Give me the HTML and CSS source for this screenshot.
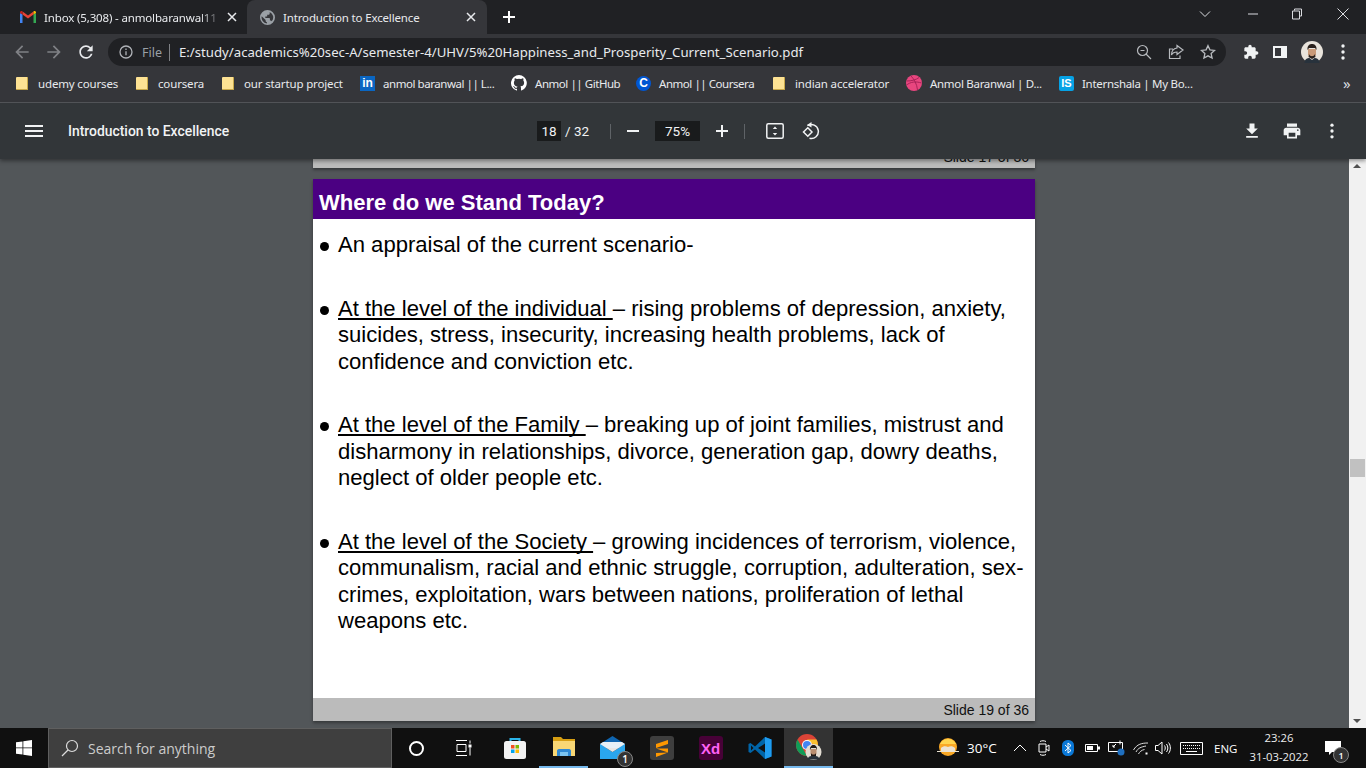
FILE: index.html
```html
<!DOCTYPE html>
<html lang="en">
<head>
    <meta charset="UTF-8">
    <meta name="viewport" content="width=device-width, initial-scale=1.0">
    <title>Introduction to Excellence</title>
    <link rel="stylesheet" href="styles.css">
</head>
<body>
    <!-- chrome tabs -->
    <div class="tabstrip">
        <div class="tab">
            <svg class="tab-icon" width="16" height="16" viewBox="0 0 16 16"><path fill="#4285f4" d="M0 14V4l2.5 1.5V14z"/><path fill="#34a853" d="M13.500 14V5.500L16 4v10z"/><path fill="#ea4335" d="M2.500 5.500 8 9.500l5.500-4V2.500L8 6.500 2.500 2.500z"/><path fill="#c5221f" d="M0 4V3.500c0-1.300 1.500-2 2.500-1v3z"/><path fill="#fbbc04" d="M13.500 5.500v-3c1-1 2.500-.3 2.500 1V4z"/></svg>
            <span class="tab-title faded">Inbox (5,308) - anmolbaranwal11</span>
            <svg class="tab-close" width="10" height="10" viewBox="0 0 10 10"><path d="M1 1l8 8M9 1 1 9"/></svg>
        </div>
        <div class="tab active">
            <svg class="tab-icon" width="15" height="15" viewBox="0 0 24 24"><path fill="#9aa0a6" d="M12 0a12 12 0 1 0 0 24 12 12 0 0 0 0-24zm-1 21.500A9.600 9.600 0 0 1 2.700 9.900L9 16v1.200c0 1.100.9 2 2 2zm7.800-3.400c-.3-.8-1-1.300-1.900-1.300h-1v-3c0-.6-.5-1-1-1H8.500V10.500h2c.6 0 1-.5 1-1v-2h2c1.100 0 2-.9 2-2V3.100a9.600 9.600 0 0 1 3.300 15z"/></svg>
            <span class="tab-title">Introduction to Excellence</span>
            <svg class="tab-close" width="10" height="10" viewBox="0 0 10 10"><path d="M1 1l8 8M9 1 1 9"/></svg>
        </div>
        <svg class="new-tab" width="14" height="14" viewBox="0 0 14 14"><path d="M7 1v12M1 7h12"/></svg>
        <div class="window-controls">
            <svg width="12" height="12" viewBox="0 0 12 12"><path d="M1 3.500 6 8.500l5-5"/></svg>
            <svg width="12" height="12" viewBox="0 0 12 12"><path d="M1 6h10"/></svg>
            <svg width="12" height="12" viewBox="0 0 12 12"><path d="M3.500 2.500V1h7v7H9M1.500 3h7v8h-7z"/></svg>
            <svg width="12" height="12" viewBox="0 0 12 12"><path d="M.5.500l11 11M11.500.500l-11 11"/></svg>
        </div>
    </div>

    <!-- address bar -->
    <div class="toolbar">
        <svg class="nav dim" width="20" height="20" viewBox="0 0 24 24"><path d="M20 11H7.830l5.590-5.590L12 4l-8 8 8 8 1.410-1.410L7.830 13H20z"/></svg>
        <svg class="nav dim" width="20" height="20" viewBox="0 0 24 24"><path d="M4 11h12.170l-5.590-5.590L12 4l8 8-8 8-1.410-1.410L16.170 13H4z"/></svg>
        <svg class="nav" width="20" height="20" viewBox="0 0 24 24"><path d="M17.650 6.350A7.960 7.960 0 0 0 12 4c-4.420 0-7.990 3.580-7.990 8s3.570 8 7.990 8c3.730 0 6.840-2.550 7.730-6h-2.080A5.990 5.990 0 0 1 12 18c-3.310 0-6-2.690-6-6s2.690-6 6-6c1.660 0 3.140.690 4.220 1.780L13 11h7V4z"/></svg>
        <div class="omnibox">
            <svg class="omni-info" width="14" height="14" viewBox="0 0 14 14"><circle cx="7" cy="7" r="6"/><path d="M7 6.200v4M7 3.500v1.400"/></svg>
            <span class="omni-file">File</span>
            <span class="omni-url">E:/study/academics%20sec-A/semester-4/UHV/5%20Happiness_and_Prosperity_Current_Scenario.pdf</span>
            <div class="omni-actions">
                <svg width="16" height="16" viewBox="0 0 16 16"><circle cx="6.500" cy="6.500" r="5"/><path d="M4.500 6.500h4M10 10l5 5"/></svg>
                <svg width="16" height="16" viewBox="0 0 16 16"><path d="M9 1.500l6 4.500-6 4.500V8C6 8 4.500 9 3.500 11c0-4 2-6.500 5.500-7zM12 11.500v3H1.500V5H5"/></svg>
                <svg width="16" height="16" viewBox="0 0 24 24"><path d="M12 2.500l2.900 6.300 6.900.8-5.100 4.700 1.400 6.800-6.100-3.400-6.100 3.400 1.400-6.800-5.100-4.700 6.900-.8z" stroke-width="2"/></svg>
            </div>
        </div>
        <div class="toolbar-right">
            <svg width="16" height="16" viewBox="0 0 24 24" class="solid"><path d="M20.500 11H19V7c0-1.100-.9-2-2-2h-4V3.500C13 2.120 11.880 1 10.500 1S8 2.120 8 3.500V5H4c-1.100 0-1.990.9-1.990 2v3.800H3.500c1.490 0 2.700 1.210 2.700 2.700s-1.210 2.700-2.700 2.700H2V20c0 1.100.9 2 2 2h3.800v-1.500c0-1.490 1.210-2.700 2.700-2.700 1.490 0 2.700 1.210 2.700 2.700V22H17c1.100 0 2-.9 2-2v-4h1.500c1.380 0 2.500-1.120 2.500-2.500S21.880 11 20.500 11z"/></svg>
            <svg width="14" height="14" viewBox="0 0 14 14" class="solid"><path fill-rule="evenodd" d="M0 1h14v12H0zM2 3v8h6V3z"/></svg>
            <svg width="22" height="22" viewBox="0 0 22 22"><circle cx="11" cy="11" r="11" fill="#e9e4dc"/><path fill="#c99a78" d="M7 8h8v6l-4 3-4-3z"/><path fill="#2a211c" d="M6.500 9C6 4 9 3 11 3s5 1 4.500 6L14 7H8zM8 13c1 3 5 3 6 0l.5 3-3.500 2-3.500-2z"/><path fill="#28323c" d="M3.500 22c0-4 3-5 5-5l2.500 2 2.500-2c2 0 5 1 5 5z"/></svg>
            <svg width="4" height="16" viewBox="0 0 4 16" class="solid"><circle cx="2" cy="2" r="1.700"/><circle cx="2" cy="8" r="1.700"/><circle cx="2" cy="14" r="1.700"/></svg>
        </div>
    </div>

    <!-- bookmarks -->
    <div class="bookmarks">
        <a class="bookmark"><i class="folder"></i>udemy courses</a>
        <a class="bookmark"><i class="folder"></i>coursera</a>
        <a class="bookmark"><i class="folder"></i>our startup project</a>
        <a class="bookmark tight"><span class="bm-logo linkedin">in</span>anmol baranwal || L...</a>
        <a class="bookmark tight"><svg class="bm-svg" width="16" height="16" viewBox="0 0 16 16"><path fill="#fff" d="M8 0a8 8 0 0 0-2.500 15.600c.4.1.5-.2.5-.4v-1.400c-2.200.5-2.700-1-2.700-1-.4-.9-.9-1.200-.9-1.200-.7-.5.1-.5.1-.5.8.1 1.200.8 1.200.8.7 1.200 1.900.9 2.300.7.1-.5.3-.9.5-1.100-1.800-.2-3.600-.9-3.600-4 0-.9.3-1.600.8-2.100-.1-.2-.4-1 .1-2.100 0 0 .7-.2 2.200.8a7.600 7.600 0 0 1 4 0c1.500-1 2.200-.8 2.200-.8.4 1.100.2 1.900.1 2.100.5.6.8 1.300.8 2.100 0 3.100-1.900 3.700-3.700 3.900.3.300.6.800.6 1.500v2.200c0 .2.100.5.600.4A8 8 0 0 0 8 0z"/></svg>Anmol || GitHub</a>
        <a class="bookmark tight"><span class="bm-logo coursera">C</span>Anmol || Coursera</a>
        <a class="bookmark"><i class="folder"></i>indian accelerator</a>
        <a class="bookmark snug"><svg class="bm-svg" width="16" height="16" viewBox="0 0 16 16"><circle cx="8" cy="8" r="8" fill="#e8467f"/><path fill="none" stroke="#a82258" d="M5 1c3 3 6 8 6.500 14M1 6c4 0 9-1 12-3.500M.5 10c4-3 9-4 15-2"/></svg>Anmol Baranwal | D...</a>
        <a class="bookmark snug"><span class="bm-logo internshala">IS</span>Internshala | My Bo...</a>
        <span class="bm-more">»</span>
    </div>

    <!-- pdf viewer toolbar -->
    <div class="pdf-toolbar">
        <div class="pdf-left">
            <svg class="pdf-menu" width="18" height="12" viewBox="0 0 18 12"><path d="M0 1h18M0 6h18M0 11h18"/></svg>
            <span class="pdf-title">Introduction to Excellence</span>
        </div>
        <div class="pdf-center">
            <span class="pdf-box page-box">18</span>
            <span class="page-total">/ 32</span>
            <span class="pdf-sep"></span>
            <svg class="pdf-zoom" width="12" height="12" viewBox="0 0 12 12"><path d="M0 6h12"/></svg>
            <span class="pdf-box zoom-box">75%</span>
            <svg class="pdf-zoom" width="12" height="12" viewBox="0 0 12 12"><path d="M0 6h12M6 0v12"/></svg>
            <span class="pdf-sep"></span>
            <svg class="pdf-fit" width="18" height="16" viewBox="0 0 18 16"><rect x=".8" y=".8" width="16.400" height="14.400" rx="1.500"/><path class="fill" d="M9 3.500l2.200 2.500H6.800zM9 12.500l2.200-2.500H6.800z"/></svg>
            <svg class="pdf-rotate" width="18" height="18" viewBox="0 0 18 18"><path d="M5.500 3.700A7 7 0 1 1 7.500 16.300"/><path class="fill" d="M9.500 0v5.500L5 3z"/><path d="M5.800 5.800 1.500 10l4.300 4.300L10 10z"/></svg>
        </div>
        <div class="pdf-right">
            <svg width="20" height="20" viewBox="0 0 24 24"><path d="M19 9h-4V3H9v6H5l7 7 7-7zM5 18v2h14v-2z"/></svg>
            <svg width="20" height="20" viewBox="0 0 24 24"><path d="M19 8H5c-1.660 0-3 1.340-3 3v6h4v4h12v-4h4v-6c0-1.660-1.340-3-3-3zm-3 11H8v-5h8zm3-7c-.55 0-1-.45-1-1s.45-1 1-1 1 .45 1 1-.45 1-1 1zm-1-9H6v4h12z"/></svg>
            <svg width="20" height="20" viewBox="0 0 24 24"><circle cx="12" cy="5" r="2"/><circle cx="12" cy="12" r="2"/><circle cx="12" cy="19" r="2"/></svg>
        </div>
    </div>

    <!-- pdf pages -->
    <div class="viewer">
        <div class="pages">
            <div class="page-end"><div class="slide-footer">Slide 17 of 36</div></div>
            <div class="slide">
                <div class="slide-head">Where do we Stand Today?</div>
                <ul class="slide-body">
                    <li><div>An appraisal of the current scenario-</div></li>
                    <li><div><u>At the level of the individual </u>– rising problems of depression, anxiety,<br>suicides, stress, insecurity, increasing health problems, lack of<br>confidence and conviction etc.</div></li>
                    <li><div><u>At the level of the Family </u>– breaking up of joint families, mistrust and<br>disharmony in relationships, divorce, generation gap, dowry deaths,<br>neglect of older people etc.</div></li>
                    <li><div><u>At the level of the Society </u>– growing incidences of terrorism, violence,<br>communalism, racial and ethnic struggle, corruption, adulteration, sex-<br>crimes, exploitation, wars between nations, proliferation of lethal<br>weapons etc.</div></li>
                </ul>
                <div class="slide-footer">Slide 19 of 36</div>
            </div>
        </div>
        <div class="scrollbar">
            <span class="arrow up"></span>
            <span class="thumb"></span>
            <span class="arrow down"></span>
        </div>
    </div>

    <!-- windows taskbar -->
    <div class="taskbar">
        <svg class="start" width="16" height="16" viewBox="0 0 16 16"><path d="M0 2.300 6.500 1.400v6.100H0zM7.300 1.300 16 0v7.500H7.300zM0 8.300h6.500v6.200L0 13.700zM7.300 8.300H16V16l-8.700-1.300z"/></svg>
        <div class="search">
            <svg width="18" height="18" viewBox="0 0 18 18"><circle cx="11" cy="7" r="5.500"/><path d="M7 11 1 17"/></svg>
            <span>Search for anything</span>
        </div>
        <div class="task cortana"><span class="ring"></span></div>
        <div class="task"><svg width="16" height="16" viewBox="0 0 16 16" class="taskview"><path d="M0 .5h11M0 15.500h11M1 4.500h9v7H1zM14 .5v3M14 7.500v8"/><path class="fill" d="M12.500 4.500h3v3h-3z"/></svg></div>
        <div class="task"><svg width="24" height="24" viewBox="0 0 24 24"><path fill="none" stroke="#2bb5ea" stroke-width="2" d="M7.500 7V3h9v4"/><rect x="1" y="5" width="22" height="18" rx="2.500" fill="#f3f3f3"/><path fill="#f25022" d="M8 9h3.500v3.500H8z"/><path fill="#7fba00" d="M12.500 9H16v3.500h-3.500z"/><path fill="#00a4ef" d="M8 13.500h3.500V17H8z"/><path fill="#ffb900" d="M12.500 13.500H16V17h-3.500z"/></svg></div>
        <div class="task open"><svg width="24" height="22" viewBox="0 0 24 22"><path fill="#d69e12" d="M1 1h8l2 2h12v6H1z"/><path fill="#f8d775" d="M1 5h22v15H1z"/><path fill="#2f89d4" d="M5 20v-5c0-1 .5-2 2-2h10c1.500 0 2 1 2 2v5h-3v-4H8v4z"/><path fill="#7cc4f0" d="M8 16h8v4H8z"/></svg></div>
        <div class="task"><svg width="26" height="24" viewBox="0 0 26 24"><path fill="#0f65b0" d="M0 8 12.500 0 25 8v4H0z"/><path fill="#2aa6ee" d="M0 8v15h25V8L12.500 16z"/><path fill="#fff" d="M0 8l12.500 8L25 8l-3-2H3z" opacity=".9"/></svg><span class="task-badge">1</span></div>
        <div class="task"><span class="app-tile sublime"><svg width="14" height="17" viewBox="0 0 14 17"><path fill="#ff9800" d="M13 0v4L1 8V4zM1 8.500l12 4v-4zM13 12.500 1 17v-4z"/></svg></span></div>
        <div class="task"><span class="app-tile xd">Xd</span></div>
        <div class="task"><svg width="24" height="24" viewBox="0 0 24 24"><path fill="#0065a9" d="M17 1 7 10.500 2.500 7 .5 8v8l2 1L7 13.500 17 23l6.500-2.500v-17zM17 7.500v9L10 12zM3 9.500 5.500 12 3 14.500z"/><path fill="#1f9cf0" d="M17 1l6.500 2.500v17L17 23z"/></svg></div>
        <div class="task open current"><svg width="26" height="26" viewBox="0 0 26 26"><circle cx="11" cy="11" r="11" fill="#db4437"/><path fill="#fbc02d" d="M11 5.500h9.500A11 11 0 0 1 14 21.500L18 11z"/><path fill="#0f9d58" d="M1.500 5.500 7 15l4 7A11 11 0 0 1 1.500 5.500z"/><circle cx="11" cy="11" r="5" fill="#fff"/><circle cx="11" cy="11" r="4" fill="#4285f4"/><circle cx="17.500" cy="18" r="8" fill="#e3ddd3"/><path fill="#b98e70" d="M14.500 15h6v5l-3 2-3-2z"/><path fill="#221a16" d="M14 16c-.5-3 1.500-5 3.500-5s4 2 3.500 5l-1-2h-5zM15 19c.8 2 4.200 2 5 0v3h-5z"/><path fill="#28323c" d="M11.500 25.500c.5-2.500 2-3.500 4-3.500h4c2 0 3.500 1 4 3.500z"/></svg></div>

        <div class="tray">
            <svg class="tray-weather" width="22" height="22" viewBox="0 0 22 22"><circle cx="11" cy="10" r="9" fill="#f9a825"/><path fill="#ffd54f" d="M3 7a9 9 0 0 1 16 0z"/><path fill="#ece3d3" d="M0 14h22v1H0zM4 11c2-2 5-2 7-1 2-1 5-1 7 1v3H4z"/></svg>
            <span class="tray-temp">30°C</span>
            <svg class="tray-chevron" width="14" height="8" viewBox="0 0 14 8"><path d="M1 7l6-6 6 6"/></svg>
            <svg class="tray-meet" width="12" height="16" viewBox="0 0 12 16"><path d="M1 4h7v8H1zM8 7l3-2v6l-3-2M2 1.500c2-1 4-1 6 0M2 14.500c2 1 4 1 6 0"/></svg>
            <svg class="tray-bt" width="12" height="16" viewBox="0 0 12 16"><rect width="12" height="16" rx="5.500" fill="#0a78d7"/><path fill="none" stroke="#fff" d="M3 5l6 5.500-3 2.500V3l3 2.500L3 11"/></svg>
            <svg class="tray-bat" width="15" height="8" viewBox="0 0 15 8"><path fill="none" stroke="#fff" d="M.5.500h12v7H.5z"/><path fill="#fff" d="M2 2h6v4H2zM13 2.500h2v3h-2z"/></svg>
            <svg class="tray-screen" width="17" height="16" viewBox="0 0 17 16"><path fill="none" stroke="#fff" d="M.5 2.500h14v9H.5zM12 .5v4M5 7l3-3M5 7h2M5 7V5"/><circle cx="13" cy="12" r="3.500" fill="#1f6fbf"/></svg>
            <svg class="tray-wifi" width="16" height="14" viewBox="0 0 16 14"><path fill="none" stroke="#ddd" d="M.5 9C4 3 9 2 15 2M3 11c2-4 5-5 10-6M5.500 13c1-2 3-4 6-4.500"/><path fill="#fff" d="M12.500 11.500h2v2h-2z"/></svg>
            <svg class="tray-vol" width="16" height="14" viewBox="0 0 16 14"><path fill="none" stroke="#fff" d="M.5 4.500h2.500L7 1v12L3 9.500H.5zM9.500 4.500c1 1.500 1 3.500 0 5M11.500 3c1.800 2.500 1.800 5.500 0 8M13.500 1.500c2.500 3 2.500 8 0 11"/></svg>
            <svg class="tray-kbd" width="23" height="13" viewBox="0 0 23 13"><path fill="none" stroke="#fff" d="M.5.500h22v12H.5z"/><path stroke="#fff" stroke-dasharray="1 1" d="M3 3.500h17M3 6.500h17"/><path stroke="#fff" d="M6 9.500h11"/></svg>
            <span class="tray-lang">ENG</span>
            <div class="tray-clock"><span>23:26</span><span>31-03-2022</span></div>
            <div class="tray-notify"><svg width="16" height="15" viewBox="0 0 16 15"><path fill="#fff" d="M0 0h16v11H7l-3 3v-3H0z"/></svg><span class="task-badge note">1</span></div>
        </div>
    </div>
</body>
</html>
```

FILE: styles.css
```css
* {
    box-sizing: border-box;
}
html, body {
    height: 100%;
}
body {
    margin: 0;
    height: 768px;
    overflow: hidden;
    display: flex;
    flex-direction: column;
    font-family: "Noto Sans", sans-serif;
    background: #525659;
    color: #fff;
}

/* tabs */
.tabstrip {
    height: 34px;
    flex: none;
    display: flex;
    align-items: center;
    background: #202124;
    font-size: 11.500px;
    letter-spacing: -0.15px;
}
.tab {
    width: 240px;
    height: 34px;
    display: flex;
    align-items: center;
    padding-left: 20px;
    color: #e8eaed;
}
.tab:first-child {
    width: 247px;
}
.tab.active {
    padding-left: 13px;
    background: #35363a;
    border-radius: 8px 8px 0 0;
}
.tab-icon {
    flex: none;
}
.tab-title {
    width: 178px;
    margin-left: 8px;
    white-space: nowrap;
    overflow: hidden;
}
.tab.active .tab-title {
    width: 183px;
}
.tab-title.faded {
    -webkit-mask-image: linear-gradient(to right, #000 88%, transparent);
    mask-image: linear-gradient(to right, #000 88%, transparent);
}
.tab-close {
    flex: none;
    margin-left: 5px;
}
.tab.active .tab-close {
    margin-left: 0;
}
.tab-close path {
    stroke: #e8eaed;
    stroke-width: 1.500;
    fill: none;
}
.new-tab {
    margin-left: 15px;
}
.new-tab path {
    stroke: #fff;
    stroke-width: 2;
    fill: none;
}
.window-controls {
    margin-left: auto;
    margin-bottom: 6px;
    display: flex;
    align-items: center;
    padding-right: 17px;
}
.window-controls svg {
    fill: none;
    stroke: #dadce0;
    stroke-width: 1;
}
.window-controls svg:nth-child(2) {
    margin-left: 36px;
}
.window-controls svg:nth-child(3) {
    margin-left: 32px;
}
.window-controls svg:nth-child(4) {
    margin-left: 34px;
}

/* address bar */
.toolbar {
    height: 32px;
    flex: none;
    display: flex;
    align-items: center;
    background: #35363a;
    padding-left: 12px;
    padding-top: 4px;
}
.nav {
    flex: none;
    margin-right: 12px;
    fill: #e8eaed;
}
.nav.dim {
    fill: #7f8185;
}
.omnibox {
    flex: none;
    width: 1118px;
    height: 28px;
    display: flex;
    align-items: center;
    padding-left: 11px;
    background: #202124;
    border-radius: 14px;
    font-size: 13.200px;
    white-space: nowrap;
}
.omni-info {
    flex: none;
    fill: none;
    stroke: #b0b3b8;
    stroke-width: 1.300;
}
.omni-file {
    margin-left: 9px;
    padding-right: 7px;
    border-right: 1px solid #7f8185;
    color: #9aa0a6;
    font-size: 12.500px;
}
.omni-url {
    margin-left: 9px;
    color: #e8eaed;
}
.omni-actions {
    margin-left: auto;
    display: flex;
    gap: 16px;
    padding-right: 10px;
}
.omni-actions svg {
    fill: none;
    stroke: #b7babe;
    stroke-width: 1.200;
}
.toolbar-right {
    display: flex;
    align-items: center;
}
.toolbar-right svg:nth-child(1) {
    margin-left: 17px;
}
.toolbar-right svg:nth-child(2) {
    margin-left: 14px;
}
.toolbar-right svg:nth-child(3) {
    margin-left: 14px;
}
.toolbar-right svg:nth-child(4) {
    margin-left: 18px;
}
.solid {
    fill: #f1f3f4;
}

/* bookmarks */
.bookmarks {
    height: 37px;
    flex: none;
    display: grid;
    grid-template-columns: 120px 86px 138px 151px 125px 137px 133px 153px 284px auto;
    align-items: center;
    padding: 0 0 2px 16px;
    background: #35363a;
    border-bottom: 1px solid #55575b;
    font-size: 11.500px;
    letter-spacing: -0.15px;
    color: #e8eaed;
}
.bookmark {
    display: flex;
    align-items: center;
    white-space: nowrap;
}
.bookmark.tight {
    letter-spacing: -0.45px;
}
.bookmark.snug {
    letter-spacing: -0.3px;
}
.folder {
    flex: none;
    width: 12px;
    height: 13px;
    margin-right: 10px;
    background: #fde293;
    border-radius: 1px;
    border-right: 1px solid #c9a94a;
    border-bottom: 1px solid #c9a94a;
}
.bm-logo {
    flex: none;
    width: 15px;
    height: 15px;
    margin-right: 8px;
    display: flex;
    align-items: center;
    justify-content: center;
    font-family: "Liberation Sans", sans-serif;
    font-weight: bold;
    font-size: 12px;
    letter-spacing: 0;
    color: #fff;
}
.linkedin {
    background: #0a66c2;
}
.coursera {
    border-radius: 50%;
    background: #0056d2;
}
.internshala {
    background: #06a2e5;
    border-radius: 2px;
    font-size: 11px;
}
.bm-svg {
    flex: none;
    margin-right: 8px;
}
.bm-more {
    font-size: 15px;
    color: #dadce0;
}

/* pdf toolbar */
.pdf-toolbar {
    position: relative;
    z-index: 2;
    height: 56px;
    flex: none;
    display: flex;
    align-items: center;
    background: #323639;
    box-shadow: 0 2px 4px rgba(0, 0, 0, 0.4);
}
.pdf-left {
    width: 537px;
    flex: none;
    display: flex;
    align-items: center;
    padding-left: 25px;
}
.pdf-menu {
    fill: none;
    stroke: #f1f3f4;
    stroke-width: 2;
}
.pdf-title {
    margin-left: 25px;
    font-family: Roboto, sans-serif;
    font-weight: 500;
    font-size: 13.900px;
    color: #f1f3f4;
}
.pdf-center {
    display: flex;
    align-items: center;
    font-family: Roboto, sans-serif;
    font-size: 13.500px;
    color: #f1f3f4;
}
.pdf-box {
    height: 20px;
    display: flex;
    align-items: center;
    justify-content: center;
    background: #191b1c;
}
.page-box {
    width: 24px;
}
.zoom-box {
    width: 45px;
}
.page-total {
    margin-left: 4px;
    width: 45px;
}
.pdf-sep {
    width: 1px;
    height: 15px;
    background: #5f6367;
}
.pdf-zoom {
    margin: 0 16px;
    fill: none;
    stroke: #f1f3f4;
    stroke-width: 2;
}
.pdf-fit {
    margin-left: 21px;
    fill: none;
    stroke: #f1f3f4;
    stroke-width: 1.500;
}
.pdf-rotate {
    margin-left: 18px;
    fill: none;
    stroke: #f1f3f4;
    stroke-width: 1.500;
}
.pdf-center .fill {
    fill: #f1f3f4;
    stroke: none;
}
.pdf-right {
    margin-left: auto;
    display: flex;
    gap: 20px;
    padding-right: 24px;
}
.pdf-right svg {
    fill: #f1f3f4;
}

/* pages */
.viewer {
    flex: 1;
    min-height: 0;
    display: flex;
}
.pages {
    flex: 1;
    display: flex;
    flex-direction: column;
    align-items: center;
    padding-right: 1px;
    overflow: hidden;
    font-family: "Liberation Sans", sans-serif;
    color: #000;
}
.page-end {
    width: 722px;
    height: 9px;
    flex: none;
    display: flex;
    flex-direction: column;
    justify-content: flex-end;
    overflow: hidden;
    box-shadow: 0 2px 3px rgba(0, 0, 0, 0.35);
}
.slide {
    width: 722px;
    height: 542px;
    flex: none;
    margin-top: 11px;
    display: flex;
    flex-direction: column;
    background: #fff;
    box-shadow: 0 2px 3px rgba(0, 0, 0, 0.35);
}
.slide-head {
    height: 40px;
    flex: none;
    display: flex;
    align-items: center;
    padding: 7px 0 0 6px;
    background: #4b0082;
    color: #fff;
    font-weight: bold;
    font-size: 22px;
}
.slide-body {
    flex: 1;
    margin: 0;
    padding: 13px 0 0 7px;
    list-style: none;
    font-size: 22.070px;
    line-height: 26.500px;
}
.slide-body li {
    display: flex;
    gap: 9px;
    margin-bottom: 37px;
    white-space: nowrap;
}
.slide-body li::before {
    content: "";
    flex: none;
    width: 9px;
    height: 9px;
    margin-top: 10px;
    border-radius: 50%;
    background: #000;
}
.slide-body u {
    text-decoration-thickness: 2px;
    text-decoration-skip-ink: none;
    text-underline-offset: 2px;
}
.slide-footer {
    height: 23px;
    flex: none;
    display: flex;
    align-items: center;
    justify-content: flex-end;
    padding-right: 6px;
    background: #bbb;
    color: #111;
    font-size: 14px;
}

/* scrollbar */
.scrollbar {
    position: relative;
    width: 17px;
    flex: none;
    background: #f1f1f1;
}
.arrow {
    position: absolute;
    left: 4px;
    width: 0;
    height: 0;
    border-left: 4px solid transparent;
    border-right: 4px solid transparent;
}
.arrow.up {
    top: 5px;
    border-bottom: 4px solid #505050;
}
.arrow.down {
    bottom: 5px;
    border-top: 4px solid #505050;
}
.thumb {
    position: absolute;
    left: 1px;
    right: 1px;
    top: 300px;
    height: 18px;
    background: #c1c1c1;
}

/* taskbar */
.taskbar {
    height: 40px;
    flex: none;
    display: flex;
    align-items: center;
    background: #101010;
    font-family: "Open Sans", sans-serif;
}
.start {
    flex: none;
    margin: 0 16px;
    fill: #fff;
}
.search {
    width: 344px;
    height: 40px;
    flex: none;
    display: flex;
    align-items: center;
    padding-left: 12px;
    background: #3f3f3f;
    border: 1px solid #5f5f5f;
    color: #ccc;
    font-size: 14px;
}
.search svg {
    flex: none;
    margin-right: 9px;
    fill: none;
    stroke: #ddd;
    stroke-width: 1.200;
}
.task {
    position: relative;
    width: 49px;
    height: 40px;
    flex: none;
    display: flex;
    align-items: center;
    justify-content: center;
}
.task.open {
    border-bottom: 2px solid #76b9ed;
}
.task.current {
    background: #333;
}
.ring {
    width: 15px;
    height: 15px;
    border: 2.500px solid #fff;
    border-radius: 50%;
}
.taskview {
    margin-right: 4px;
    fill: none;
    stroke: #fff;
}
.taskview .fill {
    fill: #fff;
    stroke: none;
}
.app-tile {
    width: 24px;
    height: 24px;
    display: flex;
    align-items: center;
    justify-content: center;
    border-radius: 3px;
}
.sublime {
    background: #3e3e3e;
}
.xd {
    background: #470137;
    color: #ff61f6;
    font-family: "Liberation Sans", sans-serif;
    font-weight: bold;
    font-size: 15px;
}
.task-badge {
    position: absolute;
    right: 4px;
    bottom: 1px;
    width: 16px;
    height: 16px;
    display: flex;
    align-items: center;
    justify-content: center;
    border: 1px solid #888;
    border-radius: 50%;
    background: #333;
    color: #fff;
    font-size: 10px;
    font-weight: 600;
}
.tray {
    margin-left: auto;
    display: flex;
    align-items: center;
    padding-right: 11px;
    font-size: 12.500px;
    color: #fff;
}
.tray svg {
    flex: none;
}
.tray-temp {
    width: 46px;
    margin-left: 8px;
    font-size: 13.500px;
}
.tray-chevron {
    fill: none;
    stroke: #fff;
    margin-right: 11px;
}
.tray-meet {
    fill: none;
    stroke: #fff;
    margin-right: 12px;
}
.tray-bt {
    margin-right: 11px;
}
.tray-bat {
    margin-right: 8px;
}
.tray-screen {
    margin-right: 8px;
}
.tray-wifi {
    margin-right: 6px;
}
.tray-vol {
    margin-right: 9px;
}
.tray-lang {
    width: 44px;
    padding-left: 11px;
    font-size: 11.500px;
}
.tray-clock {
    width: 64px;
    display: flex;
    flex-direction: column;
    align-items: center;
    margin-bottom: 2px;
    font-size: 11.300px;
    line-height: 19px;
    color: #eee;
}
.tray-notify {
    position: relative;
    width: 44px;
    height: 40px;
    display: flex;
    align-items: center;
    justify-content: center;
}
.task-badge.note {
    right: 6px;
    bottom: 5px;
    font-size: 9px;
}
```
